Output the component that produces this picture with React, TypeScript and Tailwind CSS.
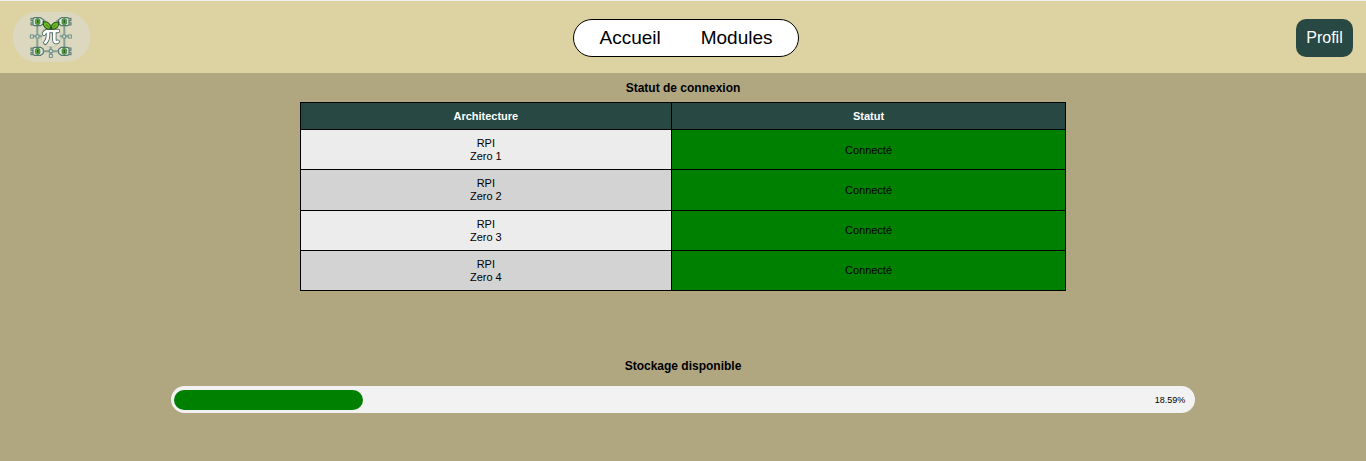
const modules = ["Zero 1", "Zero 2", "Zero 3", "Zero 4"];
const usedStorage = 18.59;

function BoardNode({ x, y, flip }: { x: number; y: number; flip?: boolean }) {
  return (
    <g transform={`translate(${x} ${y}) scale(${flip ? -1 : 1} 1)`}>
      <rect x="-20" y="-10" width="8" height="7" fill="#c9d5c8" stroke="#54796d" strokeWidth="3" />
      <rect x="-20" y="3" width="8" height="7" fill="#c9d5c8" stroke="#54796d" strokeWidth="3" />
      <path
        d="M-10 -12H9L17 -6V6L9 12H-10L-14 8V-8Z"
        fill="#e6ece3"
        stroke="#54796d"
        strokeWidth="3.5"
        strokeLinejoin="round"
      />
      <path d="M-7 -6L0 -10L7 -6V6L0 10L-7 6Z" fill="#5fa53a" stroke="#3a6f3c" strokeWidth="2" />
      <path d="M0 -5V5" stroke="#2c5c30" strokeWidth="4" />
    </g>
  );
}

function Logo() {
  return (
    <svg viewBox="0 0 156 150" className="h-[50px] w-[52px]" aria-hidden="true">
      <circle cx="78" cy="74" r="31" fill="#e2e0cd" stroke="#c3c8b3" strokeWidth="3" />
      <g fill="none" stroke="#86a094" strokeWidth="6">
        <path d="M37 38V108M118 38V108M54 118H102M54 26H62M94 26H102M22 73H52M104 73H134M77 104V130" />
      </g>
      <g fill="#dfe6dc" stroke="#6d8f84" strokeWidth="3">
        <rect x="16" y="69" width="9" height="9" />
        <rect x="33" y="69" width="9" height="9" />
        <rect x="113" y="69" width="9" height="9" />
        <rect x="130" y="69" width="9" height="9" />
        <rect x="73" y="113" width="9" height="9" />
        <rect x="73" y="127" width="9" height="9" />
      </g>
      <BoardNode x={38} y={29} />
      <BoardNode x={118} y={29} flip />
      <BoardNode x={38} y={118} />
      <BoardNode x={118} y={118} flip />
      <g fill="none" strokeLinecap="round" strokeLinejoin="round">
        <path
          d="M57 65Q60 57 68 57H99M69 59Q71 82 61 92M88 59V84Q89 94 98 89"
          stroke="#4b6c63"
          strokeWidth="13"
        />
        <path
          d="M57 65Q60 57 68 57H99M69 59Q71 82 61 92M88 59V84Q89 94 98 89"
          stroke="#ffffff"
          strokeWidth="8"
        />
      </g>
      <g fill="#6cbb1c" stroke="#1d4524" strokeWidth="3" strokeLinejoin="round">
        <path d="M77 52Q68 53 61 48Q54 42 54 29Q69 28 74 36Q78 42 77 52Z" />
        <path d="M79 52Q78 42 82 36Q88 29 102 30Q102 42 95 48Q89 53 79 52Z" />
        <path d="M63 38L76 50M92 39L80 50" fill="none" strokeWidth="1.5" />
      </g>
    </svg>
  );
}

export default function App() {
  return (
    <div className="flex min-h-screen flex-col bg-[#b0a780] font-['Liberation_Sans',Arial,sans-serif] text-black">
      <header className="grid grid-cols-[560fr_auto_554fr] items-center border-t border-[#f0f0f0] bg-[#ddd2a1] px-[13px] pt-[11px] pb-[9px]">
        <a
          href="#accueil"
          aria-label="Page d'accueil"
          className="mb-[2px] flex h-[50px] w-[77px] items-center justify-center justify-self-start rounded-[24px] bg-[#dbd8bf] pr-[2px]"
        >
          <Logo />
        </a>
        <nav className="flex h-[38px] items-center gap-10 rounded-full border border-black bg-white px-[25px] text-[19px]">
          <a href="#accueil">Accueil</a>
          <a href="#modules">Modules</a>
        </nav>
        <button
          type="button"
          className="h-[38px] w-[57px] justify-self-end rounded-[10px] bg-[#284843] text-base text-white"
        >
          Profil
        </button>
      </header>

      <main className="flex flex-col items-center pt-[7px] text-center">
        <h1 className="text-xs leading-4 font-bold">Statut de connexion</h1>
        <table className="mt-[6px] h-[189px] w-[56.1%] border-collapse text-[11px] leading-[13px]">
          <thead>
            <tr className="h-[27px] bg-[#284843] text-white">
              <th scope="col" className="w-[371px] border border-black font-bold">
                Architecture
              </th>
              <th scope="col" className="border border-black font-bold">
                Statut
              </th>
            </tr>
          </thead>
          <tbody>
            {modules.map((name) => (
              <tr key={name} className="bg-[#ececec] even:bg-[#d3d3d3]">
                <td className="border border-black pt-px">
                  RPI
                  <br />
                  {name}
                </td>
                <td className="border border-black bg-[#008000] pt-px">Connecté</td>
              </tr>
            ))}
          </tbody>
        </table>

        <h2 className="mt-[67px] text-xs leading-4 font-bold">Stockage disponible</h2>
        <div
          role="progressbar"
          aria-label="Stockage disponible"
          aria-valuenow={usedStorage}
          aria-valuemin={0}
          aria-valuemax={100}
          className="mt-3 flex h-[27px] w-3/4 items-center rounded-full bg-[#f2f2f2] px-[3px]"
        >
          <div className="h-5 shrink-0 rounded-full bg-[#008000]" style={{ width: `${usedStorage}%` }} />
          <span className="ml-auto pr-[7px] text-[9px] leading-3">{usedStorage}%</span>
        </div>
      </main>
    </div>
  );
}
